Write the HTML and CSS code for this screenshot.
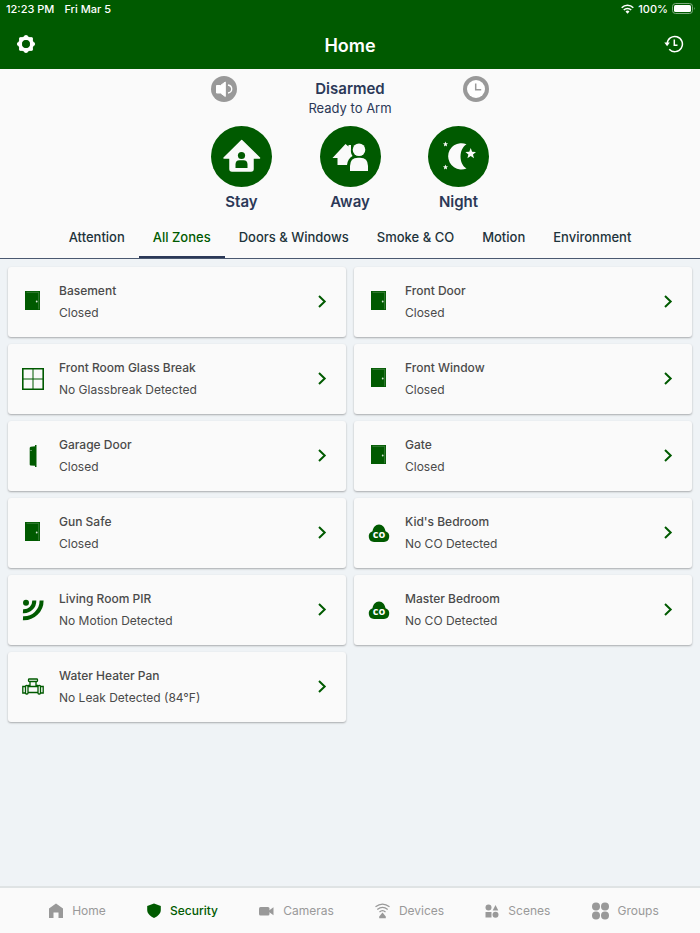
FILE: index.html
```html
<!DOCTYPE html>
<html lang="en">

<head>
    <meta charset="utf-8">
    <meta name="viewport" content="width=device-width, initial-scale=1">
    <title>Home</title>

    <link rel="stylesheet" href="styles.css">
</head>

<body>
    <!-- Shared icons -->
    <svg class="sprite" aria-hidden="true">
        <symbol id="door" viewBox="0 0 22 22">
            <path fill="#005a00" d="M3 0h15v19H3z" />
            <path fill="none" stroke="#6f9f6f" stroke-width=".5" d="M4.500 1.300h12.200v17" />
            <circle cx="14.700" cy="10.500" r=".9" fill="#d5e4d5" />
        </symbol>
        <symbol id="cloud" viewBox="0 0 22 22">
            <path fill="#005a00" d="M6 20a5.500 5.500 0 0 1-1.500-10.700C5 5.500 7.500 2.500 11 2.500s6 3 6.500 6.800A5.500 5.500 0 0 1 16 20z" />
        </symbol>
        <symbol id="chevron" viewBox="0 0 12 14">
            <path fill="none" stroke="#005a00" stroke-width="2" d="M3 1 8.700 6.500 3 12" />
        </symbol>
    </svg>

    <header class="header">
        <div class="status">
            <span>12:23 PM</span>
            <span>Fri Mar 5</span>
            <span class="status-right">
                <svg width="13" height="10" viewBox="0 0 13 10">
                    <path fill="none" stroke="#fff" stroke-width="1.600" d="M.7 3.700a8.200 8.200 0 0 1 11.600 0M2.800 6a5.200 5.200 0 0 1 7.400 0" />
                    <path fill="#fff" d="M4.500 7.600a2.800 2.800 0 0 1 4 0L6.500 9.800z" />
                </svg>
                100%
                <svg width="24" height="12" viewBox="0 0 24 12">
                    <rect x=".5" y=".5" width="20" height="10" rx="3" fill="none" stroke="#80ac80" />
                    <rect x="2" y="2" width="17" height="7" rx="1.500" fill="#fff" />
                    <path fill="#80ac80" d="M22 4q1.500 1.500 0 3z" />
                </svg>
            </span>
        </div>
        <div class="title-bar">
            <button type="button" class="icon-btn" aria-label="Settings">
                <svg width="20" height="20" viewBox="0 0 20 20">
                    <circle cx="10" cy="10" r="5.800" fill="none" stroke="#fff" stroke-width="4" />
                    <path stroke="#fff" stroke-width="4.200" stroke-linecap="round" d="M10 3v0M10 17v0M3 10v0M17 10v0M5 5v0M15 5v0M5 15v0M15 15v0" />
                    <circle cx="10" cy="10" r="3.900" fill="#005a00" />
                </svg>
            </button>
            <h1>Home</h1>
            <button type="button" class="icon-btn" aria-label="History">
                <svg width="20" height="20" viewBox="0 0 20 20">
                    <path fill="none" stroke="#fff" stroke-width="1.500" d="M3.200 10a7.600 7.600 0 1 1 2 5.200M10.300 5.500v5.700h3.200" />
                    <path fill="#fff" d="M.3 8.500h5.600L3.100 12.200z" />
                </svg>
            </button>
        </div>
    </header>

    <section class="panel">
        <div class="arm-status">
            <button type="button" class="icon-btn" aria-label="Sound">
                <svg width="26" height="26" viewBox="0 0 26 26">
                    <circle cx="13" cy="13" r="13" fill="#999" />
                    <path fill="#fff" stroke="#fff" stroke-linejoin="round" d="M5.500 9.500h4L14.300 6v14.500L9.500 17h-4z" />
                    <path fill="none" stroke="#fff" stroke-width="1.300" d="M17 9c5 1 5 7 0 8" />
                </svg>
            </button>
            <div class="arm-text">
                <h2>Disarmed</h2>
                <p>Ready to Arm</p>
            </div>
            <button type="button" class="icon-btn" aria-label="Timer">
                <svg width="26" height="26" viewBox="0 0 26 26">
                    <circle cx="13" cy="13" r="13" fill="#999" />
                    <circle cx="13" cy="13" r="9" fill="#fff" />
                    <path fill="none" stroke="#999" stroke-width="1.500" d="M12.700 7.500v6.200h5.500" />
                </svg>
            </button>
        </div>

        <div class="modes">
            <button type="button" class="mode">
                <svg width="61" height="61" viewBox="0 0 61 61">
                    <circle cx="30.500" cy="30.500" r="30.500" fill="#005a00" />
                    <path fill="#fafafa" stroke="#fafafa" stroke-width="1.500" stroke-linejoin="round" d="M30.700 14.500 48.500 32H42v11q0 2-2 2H21q-2 0-2-2V32h-6z" />
                    <circle cx="30.500" cy="29.500" r="3.600" fill="#005a00" />
                    <path fill="#005a00" d="M24.500 42v-3.500q0-4.300 4-4.300h4q4 0 4 4.300V42z" />
                </svg>
                Stay
            </button>
            <button type="button" class="mode">
                <svg width="61" height="61" viewBox="0 0 61 61">
                    <circle cx="30.500" cy="30.500" r="30.500" fill="#005a00" />
                    <path fill="#fafafa" d="M12.500 32 25.500 18l3 2.500V19h2.500v4c-.5 3 .3 5 1.500 7-3 1.500-5 4.500-5.500 9H17.500v-7z" />
                    <path fill="#fafafa" d="M30 45v-5q0-8.300 8-8.300h2q8 0 8 8.300v5z" />
                    <circle cx="39" cy="23.700" r="6.300" fill="#fafafa" />
                </svg>
                Away
            </button>
            <button type="button" class="mode">
                <svg width="61" height="61" viewBox="0 0 61 61">
                    <circle cx="30.500" cy="30.500" r="30.500" fill="#005a00" />
                    <path fill="#fafafa" d="M38.500 18.200A13.200 13.200 0 1 0 38.500 42.500C30.500 38 30.500 23 38.500 18.200z" />
                    <path fill="#fafafa" d="m42.700 22 1.400 3.700 3.900.2-3 2.500 1 3.800-3.300-2.100-3.300 2.100 1-3.800-3-2.500 3.900-.2zM17.500 15.500l.7 1.800 1.900.1-1.500 1.200.5 1.900-1.600-1.100-1.600 1.100.5-1.900-1.500-1.200 1.900-.1zM17.500 38.500l.7 1.800 1.900.1-1.500 1.200.5 1.900-1.600-1.100-1.600 1.100.5-1.900-1.500-1.200 1.900-.1z" />
                </svg>
                Night
            </button>
        </div>

        <nav class="tabs">
            <button type="button">Attention</button>
            <button type="button" class="active">All Zones</button>
            <button type="button">Doors &amp; Windows</button>
            <button type="button">Smoke &amp; CO</button>
            <button type="button">Motion</button>
            <button type="button">Environment</button>
        </nav>
    </section>

    <main class="zones">
        <a href="#" class="zone">
            <svg class="zone-icon"><use href="#door" /></svg>
            <div class="zone-text">
                <h3>Basement</h3>
                <p>Closed</p>
            </div>
            <svg class="chevron"><use href="#chevron" /></svg>
        </a>
        <a href="#" class="zone">
            <svg class="zone-icon"><use href="#door" /></svg>
            <div class="zone-text">
                <h3>Front Door</h3>
                <p>Closed</p>
            </div>
            <svg class="chevron"><use href="#chevron" /></svg>
        </a>
        <a href="#" class="zone">
            <svg class="zone-icon" viewBox="0 0 22 22">
                <path fill="none" stroke="#005a00" stroke-width="1.600" d="M.8.8h20.400v20.400H.8z" />
                <path stroke="#005a00" stroke-width="1" d="M11 1v20M1 11h20" />
            </svg>
            <div class="zone-text">
                <h3>Front Room Glass Break</h3>
                <p>No Glassbreak Detected</p>
            </div>
            <svg class="chevron"><use href="#chevron" /></svg>
        </a>
        <a href="#" class="zone">
            <svg class="zone-icon"><use href="#door" /></svg>
            <div class="zone-text">
                <h3>Front Window</h3>
                <p>Closed</p>
            </div>
            <svg class="chevron"><use href="#chevron" /></svg>
        </a>
        <a href="#" class="zone">
            <svg class="zone-icon" viewBox="0 0 22 22">
                <path fill="#005a00" d="M7.700 3q0-1 1-1.200l4.300-.5V0h1.500v22H13v-1.200l-4.300-.3q-1 0-1-1z" />
                <path stroke="#a9c6a9" stroke-width=".7" d="M8.300 5.500h1.500" />
            </svg>
            <div class="zone-text">
                <h3>Garage Door</h3>
                <p>Closed</p>
            </div>
            <svg class="chevron"><use href="#chevron" /></svg>
        </a>
        <a href="#" class="zone">
            <svg class="zone-icon"><use href="#door" /></svg>
            <div class="zone-text">
                <h3>Gate</h3>
                <p>Closed</p>
            </div>
            <svg class="chevron"><use href="#chevron" /></svg>
        </a>
        <a href="#" class="zone">
            <svg class="zone-icon"><use href="#door" /></svg>
            <div class="zone-text">
                <h3>Gun Safe</h3>
                <p>Closed</p>
            </div>
            <svg class="chevron"><use href="#chevron" /></svg>
        </a>
        <a href="#" class="zone">
            <svg class="zone-icon" viewBox="0 0 22 22">
                <use href="#cloud" />
                <text x="11" y="16" text-anchor="middle" class="co-text">co</text>
            </svg>
            <div class="zone-text">
                <h3>Kid's Bedroom</h3>
                <p>No CO Detected</p>
            </div>
            <svg class="chevron"><use href="#chevron" /></svg>
        </a>
        <a href="#" class="zone">
            <svg class="zone-icon" viewBox="0 0 22 22">
                <circle cx="4" cy="3.700" r="3" fill="#005a00" />
                <path fill="none" stroke="#005a00" stroke-width="4" d="M1 12.300A10.500 10.500 0 0 0 12.300 1.500M1 19.300A17.700 17.700 0 0 0 19.600 1.500" />
            </svg>
            <div class="zone-text">
                <h3>Living Room PIR</h3>
                <p>No Motion Detected</p>
            </div>
            <svg class="chevron"><use href="#chevron" /></svg>
        </a>
        <a href="#" class="zone">
            <svg class="zone-icon" viewBox="0 0 22 22">
                <use href="#cloud" />
                <text x="11" y="16" text-anchor="middle" class="co-text">co</text>
            </svg>
            <div class="zone-text">
                <h3>Master Bedroom</h3>
                <p>No CO Detected</p>
            </div>
            <svg class="chevron"><use href="#chevron" /></svg>
        </a>
        <a href="#" class="zone">
            <svg class="zone-icon" viewBox="0 0 22 22">
                <g fill="none" stroke="#005a00" stroke-width="1.300">
                    <rect x="6.500" y="3" width="9" height="2.500" rx=".8" />
                    <path d="M8 5.500V9.500H6M14 5.500v4h2M6 10.500h10M6 16.500h10" />
                    <rect x="3.500" y="9.500" width="2.500" height="8.500" rx="1" />
                    <rect x="16" y="9.500" width="2.500" height="8.500" rx="1" />
                    <path d="M3.500 10.500H.8V17h2.700M18.500 10.500h2.700V17h-2.700" />
                </g>
            </svg>
            <div class="zone-text">
                <h3>Water Heater Pan</h3>
                <p>No Leak Detected (84°F)</p>
            </div>
            <svg class="chevron"><use href="#chevron" /></svg>
        </a>
    </main>

    <nav class="bottom-nav">
        <a href="#">
            <svg width="14" height="16" viewBox="0 0 14 16">
                <path fill="#999" d="M7 .5 14 5.500V15H9.500V9.500h-5V15H0V5.500z" />
            </svg>
            Home
        </a>
        <a href="#" class="active">
            <svg width="14" height="16" viewBox="0 0 14 16">
                <path fill="#005a00" d="M7 .5 13.800 3v4c0 3.500-2.700 6-6.800 8C3 13 .2 10.500.2 7V3z" />
            </svg>
            Security
        </a>
        <a href="#">
            <svg width="15" height="16" viewBox="0 0 15 16">
                <rect x="0" y="4" width="10.500" height="8.500" rx="1.500" fill="#999" />
                <path fill="#999" d="m10 7.500 4.500-3.300v8L10 9z" />
            </svg>
            Cameras
        </a>
        <a href="#">
            <svg width="15" height="16" viewBox="0 0 15 16">
                <path fill="none" stroke="#999" stroke-width="1.200" d="M.5 3.800q7-5.500 14 0M2.300 6.500q5.200-4.400 10.400 0M4.500 9q3-2.800 6 0" />
                <path fill="#999" d="m7.500 9.500 3.300 4v1.700H4.200v-1.700z" />
            </svg>
            Devices
        </a>
        <a href="#">
            <svg width="14" height="16" viewBox="0 0 14 16">
                <g fill="#999">
                    <circle cx="3.500" cy="4.500" r="3" />
                    <path d="M10.500 2 13.300 7.500H7.700zM.5 9h6v5.500h-6z" />
                    <circle cx="10.500" cy="11.700" r="3" />
                </g>
            </svg>
            Scenes
        </a>
        <a href="#">
            <svg width="17" height="18" viewBox="0 0 17 18">
                <g fill="#999">
                    <circle cx="4" cy="4.500" r="4" />
                    <circle cx="13" cy="4.500" r="4" />
                    <circle cx="4" cy="13.500" r="4" />
                    <circle cx="13" cy="13.500" r="4" />
                </g>
            </svg>
            Groups
        </a>
    </nav>
</body>

</html>
```
FILE: styles.css
```css
* {
    box-sizing: border-box;
}

body {
    margin: 0;
    min-height: 100vh;
    display: flex;
    flex-direction: column;
    background-color: #eff3f6;
    font-family: Inter, Roboto, "Liberation Sans", sans-serif;
    font-size: 12px;
    color: #4a4a4a;
}

h1,
h2,
h3,
p {
    margin: 0;
}

button {
    border: none;
    background: none;
    padding: 0;
    font-family: inherit;
    cursor: pointer;
}

a {
    color: inherit;
    text-decoration: none;
}

svg {
    display: block;
    flex-shrink: 0;
}

.sprite {
    position: absolute;
    width: 0;
    height: 0;
}

.header {
    background-color: #005a00;
    color: #fff;
}

.status {
    display: flex;
    gap: 10px;
    height: 18px;
    padding: 0 4px 0 6px;
    align-items: center;
    font-size: 11px;
    font-weight: 500;
}

.status-right {
    display: flex;
    align-items: center;
    gap: 4px;
    margin-left: auto;
}

.title-bar {
    display: flex;
    justify-content: space-between;
    height: 51px;
    padding: 0 16px;
}

.title-bar .icon-btn {
    height: 51px;
}

.title-bar h1 {
    font-size: 18px;
    font-weight: 600;
    line-height: 56px;
}

.panel {
    background-color: #fafafa;
    border-bottom: 1px solid #4a5870;
    color: #2b3857;
}

.arm-status,
.modes {
    display: flex;
    justify-content: space-between;
    width: 278px;
    margin: 0 auto;
}

.arm-status {
    align-items: flex-start;
    padding-top: 7px;
}

.arm-text {
    padding-top: 3px;
    text-align: center;
}

.arm-text h2 {
    font-size: 15px;
    font-weight: 600;
    line-height: 20px;
}

.arm-text p {
    font-size: 13px;
    line-height: 19px;
}

.modes {
    padding-top: 8px;
}

.mode {
    display: flex;
    flex-direction: column;
    align-items: center;
    width: 61px;
    color: #2b3857;
    font-size: 15px;
    font-weight: 600;
    line-height: 30px;
}

.tabs {
    display: flex;
    justify-content: center;
    height: 41px;
}

.tabs button {
    padding: 0 14px;
    border-bottom: 2px solid transparent;
    color: #1d333b;
    font-size: 13px;
    font-weight: 500;
}

.tabs .active {
    border-color: #2b3857;
    color: #005a00;
}

.zones {
    display: grid;
    grid-template-columns: 1fr 1fr;
    gap: 7px 8px;
    padding: 8px;
}

.zone {
    display: flex;
    align-items: center;
    height: 70px;
    padding: 0 18px 0 14px;
    border-radius: 3px;
    background-color: #fafafa;
    box-shadow: 0 1px 2px rgba(0, 0, 0, 0.3);
}

.zone-icon {
    width: 22px;
    height: 22px;
}

.zone-text {
    flex: 1;
    padding-left: 15px;
}

.zone-text h3 {
    font-size: 12px;
    font-weight: 500;
    line-height: 22px;
}

.zone-text p {
    font-size: 12px;
    line-height: 22px;
}

.co-text {
    fill: #fff;
    font-family: "Open Sans", sans-serif;
    font-size: 11px;
    font-weight: 700;
}

.chevron {
    width: 12px;
    height: 14px;
}

.bottom-nav {
    display: flex;
    justify-content: space-evenly;
    align-items: center;
    height: 47px;
    margin-top: auto;
    padding-left: 8px;
    border-top: 2px solid #dfe3e4;
    background-color: #fafafa;
    color: #999;
}

.bottom-nav a {
    display: flex;
    align-items: center;
    gap: 9px;
}

.bottom-nav .active {
    color: #005a00;
    font-weight: 500;
}
```
